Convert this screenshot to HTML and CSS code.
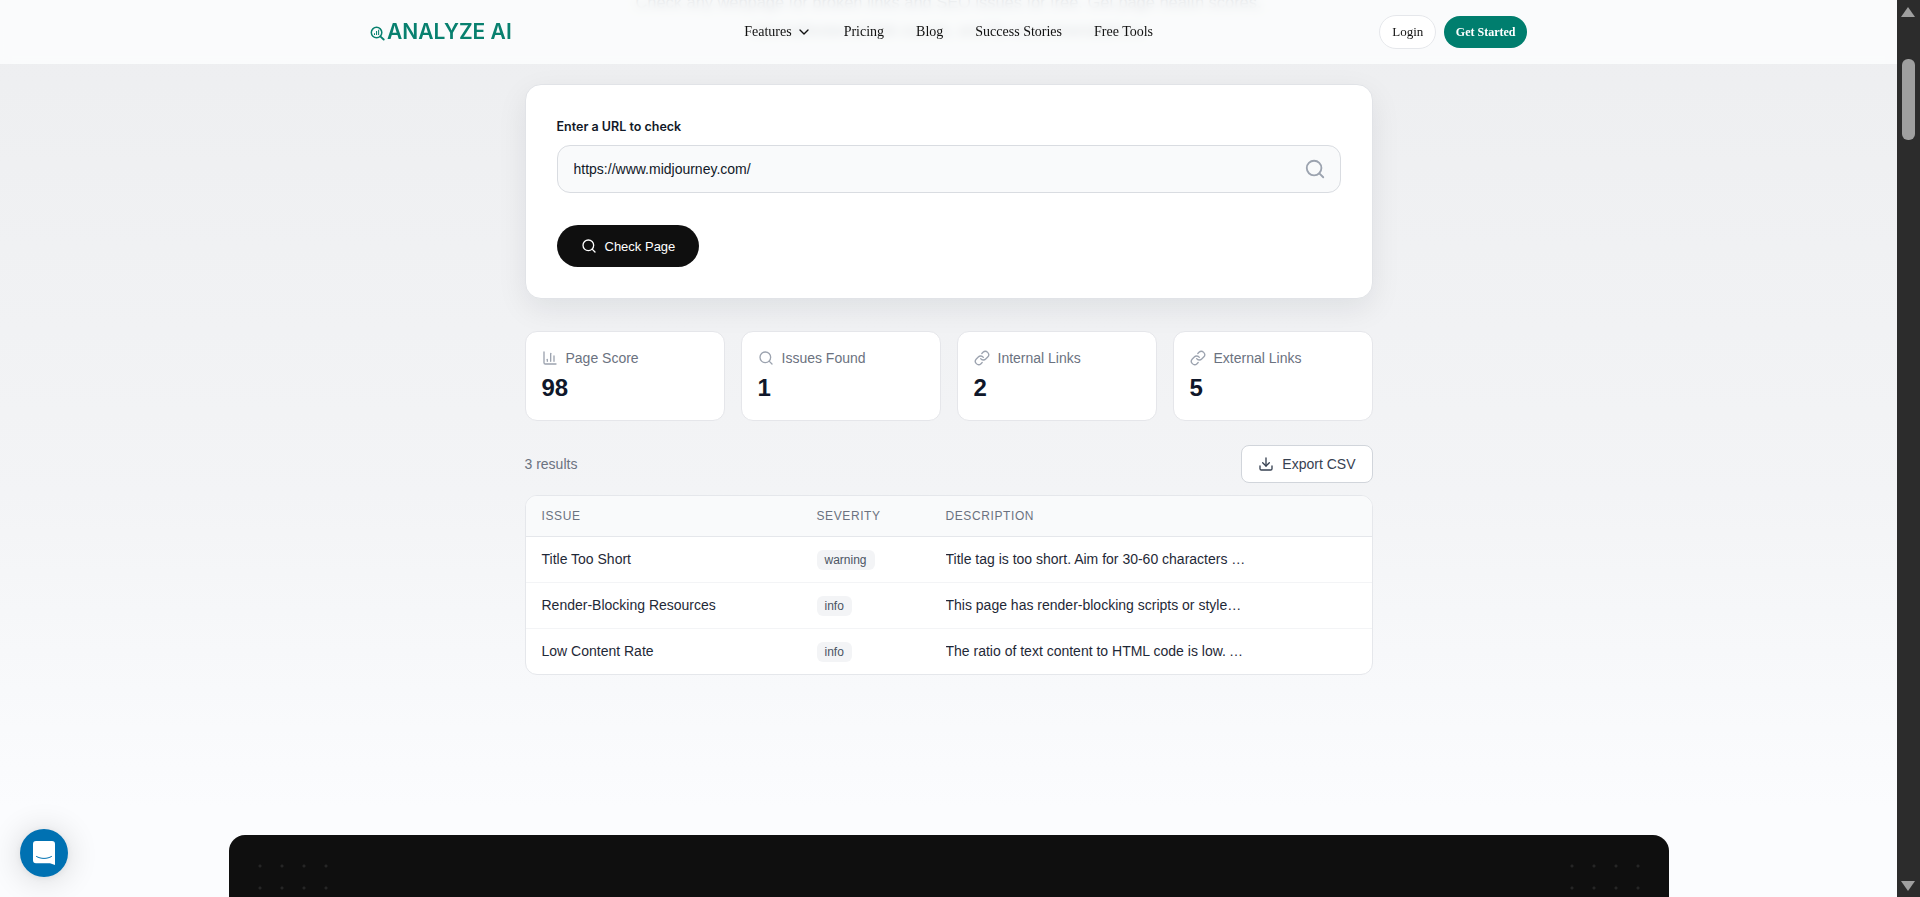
FILE: index.html
```html
<!DOCTYPE html>
<html lang="en">
<head>
  <meta charset="UTF-8">
  <meta name="viewport" content="width=device-width, initial-scale=1.0">
  <title>Broken Link Checker - Analyze AI</title>
  <link rel="stylesheet" href="styles.css">
</head>
<body>
  <div class="page">
    <header class="site-header">
      <a class="logo" href="#">
        <svg class="logo-icon" viewBox="0 0 16 16" fill="none" stroke="currentColor">
          <circle cx="7" cy="7" r="5.6" stroke-width="1.6"/>
          <path d="M11 11l3.6 3.4" stroke-width="2" stroke-linecap="round"/>
          <path d="M4.8 9.5V7.8M7 9.5V5.2M9.2 9.5V4" stroke-width="1.1"/>
        </svg>
        <span class="logo-text">ANALYZE AI</span>
      </a>
      <nav class="main-nav">
        <a class="nav-link" href="#">Features
          <svg class="nav-chevron" viewBox="0 0 24 24" fill="none" stroke="currentColor" stroke-width="2" stroke-linecap="round" stroke-linejoin="round"><path d="m6 9 6 6 6-6"/></svg>
        </a>
        <a class="nav-link" href="#">Pricing</a>
        <a class="nav-link" href="#">Blog</a>
        <a class="nav-link" href="#">Success Stories</a>
        <a class="nav-link" href="#">Free Tools</a>
      </nav>
      <div class="header-actions">
        <a class="btn-login" href="#">Login</a>
        <a class="btn-started" href="#">Get Started</a>
      </div>
    </header>

    <main class="content">
      <p class="hero-text">Check any webpage for broken links and SEO issues for free. Get page health scores, internal/external link counts, and fix recommendations.</p>

      <section class="check-card">
        <label class="field-label" for="url-input">Enter a URL to check</label>
        <div class="field-wrap">
          <input class="url-input" id="url-input" type="text" value="https://www.midjourney.com/">
          <svg class="field-icon" viewBox="0 0 24 24" fill="none" stroke="currentColor" stroke-width="2" stroke-linecap="round" stroke-linejoin="round"><circle cx="11" cy="11" r="8"/><path d="m21 21-4.3-4.3"/></svg>
        </div>
        <button class="btn-check">
          <svg class="icon" viewBox="0 0 24 24" fill="none" stroke="currentColor" stroke-width="2" stroke-linecap="round" stroke-linejoin="round"><circle cx="11" cy="11" r="8"/><path d="m21 21-4.3-4.3"/></svg>
          Check Page
        </button>
      </section>

      <section class="stats-grid">
        <div class="stat-card">
          <div class="stat-label">
            <svg class="icon" viewBox="0 0 24 24" fill="none" stroke="currentColor" stroke-width="2" stroke-linecap="round" stroke-linejoin="round"><path d="M3 3v16a2 2 0 0 0 2 2h16"/><path d="M18 17V9"/><path d="M13 17V5"/><path d="M8 17v-3"/></svg>
            Page Score
          </div>
          <div class="stat-value">98</div>
        </div>
        <div class="stat-card">
          <div class="stat-label">
            <svg class="icon" viewBox="0 0 24 24" fill="none" stroke="currentColor" stroke-width="2" stroke-linecap="round" stroke-linejoin="round"><circle cx="11" cy="11" r="8"/><path d="m21 21-4.3-4.3"/></svg>
            Issues Found
          </div>
          <div class="stat-value">1</div>
        </div>
        <div class="stat-card">
          <div class="stat-label">
            <svg class="icon" viewBox="0 0 24 24" fill="none" stroke="currentColor" stroke-width="2" stroke-linecap="round" stroke-linejoin="round"><path d="M10 13a5 5 0 0 0 7.54.54l3-3a5 5 0 0 0-7.07-7.07l-1.72 1.71"/><path d="M14 11a5 5 0 0 0-7.54-.54l-3 3a5 5 0 0 0 7.07 7.07l1.71-1.71"/></svg>
            Internal Links
          </div>
          <div class="stat-value">2</div>
        </div>
        <div class="stat-card">
          <div class="stat-label">
            <svg class="icon" viewBox="0 0 24 24" fill="none" stroke="currentColor" stroke-width="2" stroke-linecap="round" stroke-linejoin="round"><path d="M10 13a5 5 0 0 0 7.54.54l3-3a5 5 0 0 0-7.07-7.07l-1.72 1.71"/><path d="M14 11a5 5 0 0 0-7.54-.54l-3 3a5 5 0 0 0 7.07 7.07l1.71-1.71"/></svg>
            External Links
          </div>
          <div class="stat-value">5</div>
        </div>
      </section>

      <div class="results-bar">
        <span class="results-count">3 results</span>
        <button class="btn-export">
          <svg class="icon" viewBox="0 0 24 24" fill="none" stroke="currentColor" stroke-width="2" stroke-linecap="round" stroke-linejoin="round"><path d="M21 15v4a2 2 0 0 1-2 2H5a2 2 0 0 1-2-2v-4"/><path d="m7 10 5 5 5-5"/><path d="M12 15V3"/></svg>
          Export CSV
        </button>
      </div>

      <div class="table-wrap">
        <table class="results-table">
          <thead>
            <tr>
              <th class="col-issue">Issue</th>
              <th class="col-severity">Severity</th>
              <th>Description</th>
            </tr>
          </thead>
          <tbody>
            <tr>
              <td>Title Too Short</td>
              <td><span class="badge">warning</span></td>
              <td><div class="truncate">Title tag is too short. Aim for 30-60 characters for better click-through rates.</div></td>
            </tr>
            <tr>
              <td>Render-Blocking Resources</td>
              <td><span class="badge">info</span></td>
              <td><div class="truncate">This page has render-blocking scripts or stylesheets in the document head.</div></td>
            </tr>
            <tr>
              <td>Low Content Rate</td>
              <td><span class="badge">info</span></td>
              <td><div class="truncate">The ratio of text content to HTML code is low. Add more useful copy to the page.</div></td>
            </tr>
          </tbody>
        </table>
      </div>
    </main>

    <section class="cta-section">
      <div class="dots dots-left"></div>
      <div class="dots dots-right"></div>
    </section>

    <button class="chat-btn" aria-label="Open chat">
      <svg viewBox="0 0 22 24" width="22" height="24">
        <path fill="#fff" d="M3 0h16a3 3 0 0 1 3 3v21l-5-1.800H3a3 3 0 0 1-3-3V3a3 3 0 0 1 3-3z"/>
        <path fill="none" stroke="#0071b2" stroke-width="1" stroke-linecap="round" d="M3.500 15.500c4.500 2.600 10.500 2.600 15 0"/>
      </svg>
    </button>
  </div>

  <div class="scrollbar">
    <div class="arrow-up"></div>
    <div class="thumb"></div>
    <div class="arrow-down"></div>
  </div>
</body>
</html>
```

FILE: styles.css
```css
/* Page frame */
html, body {
  height: 100%;
  margin: 0;
}

body {
  display: flex;
  overflow: hidden;
  font-family: "Liberation Sans", Arial, sans-serif;
  color: #111827;
}

.page {
  position: relative;
  flex: 1;
  min-width: 0;
  overflow: hidden;
  background: linear-gradient(180deg, #edeef0 0%, #f3f4f6 55%, #fbfcfe 90%);
}

/* Scrollbar */
.scrollbar {
  position: relative;
  width: 23px;
  flex-shrink: 0;
  background-color: #2c2c2c;
}

.arrow-up, .arrow-down {
  position: absolute;
  left: 4px;
  width: 0;
  height: 0;
  border-left: 7.5px solid transparent;
  border-right: 7.5px solid transparent;
}

.arrow-up {
  top: 7px;
  border-bottom: 10px solid #9f9f9f;
}

.arrow-down {
  bottom: 6px;
  border-top: 10px solid #9f9f9f;
}

.thumb {
  position: absolute;
  top: 59px;
  left: 5px;
  width: 13px;
  height: 81px;
  border-radius: 6px;
  background-color: #9f9f9f;
}

/* Header */
.site-header {
  position: absolute;
  top: 0;
  left: 0;
  right: 0;
  z-index: 10;
  height: 64px;
  padding: 0 370px;
  display: flex;
  align-items: center;
  justify-content: space-between;
  background-color: rgba(252, 254, 254, 0.82);
  backdrop-filter: blur(5px);
  font-family: "Liberation Serif", "Times New Roman", serif;
}

.logo {
  display: flex;
  align-items: center;
  gap: 2px;
  width: 141px;
  color: #08806f;
  text-decoration: none;
  white-space: nowrap;
}

.logo-icon {
  width: 15px;
  height: 15px;
  margin-top: 3px;
  flex-shrink: 0;
}

.logo-text {
  font-family: Inter, sans-serif;
  font-size: 21px;
  font-weight: 600;
  line-height: 24px;
}

.main-nav {
  display: flex;
  align-items: center;
  gap: 32px;
  margin-top: -1px;
  margin-left: 7px;
}

.nav-link {
  display: flex;
  align-items: center;
  gap: 4px;
  font-size: 14px;
  color: #111;
  text-decoration: none;
}

.nav-chevron {
  width: 16px;
  height: 16px;
}

.header-actions {
  display: flex;
  align-items: center;
  gap: 8px;
}

.btn-login {
  padding: 0 12px;
  line-height: 32px;
  font-size: 13px;
  color: #111;
  text-decoration: none;
  background-color: #fff;
  border: 1px solid #e5e7eb;
  border-radius: 17px;
}

.btn-started {
  padding: 0 11.5px;
  line-height: 32px;
  font-size: 12px;
  font-weight: 700;
  color: #fff;
  text-decoration: none;
  background-color: #007e6e;
  border-radius: 16px;
}

/* Main column */
.content {
  width: 848px;
  margin: -12px auto 0;
}

.hero-text {
  margin: 0 auto 40px;
  max-width: 640px;
  font-size: 16.4px;
  line-height: 28px;
  text-align: center;
  color: #6b7280;
}

.check-card {
  padding: 32px 31px 31px;
  background: white;
  border: 1px solid #e1e3e7;
  border-radius: 16px;
  box-shadow: 0 10px 30px rgba(17, 24, 39, 0.08);
}

.field-label {
  display: block;
  margin-bottom: 9px;
  font-family: Inter, sans-serif;
  font-size: 12.5px;
  font-weight: 600;
  line-height: 19px;
  color: #111827;
}

.field-wrap {
  position: relative;
  margin-bottom: 32px;
}

.url-input {
  display: block;
  box-sizing: border-box;
  width: 100%;
  height: 48px;
  padding: 0 48px 0 16px;
  font-family: "Liberation Sans", Arial, sans-serif;
  font-size: 14px;
  color: #111827;
  background-color: #f9fafb;
  border: 1px solid #d9dce1;
  border-radius: 13px;
  outline: none;
}

.field-icon {
  position: absolute;
  top: 13px;
  right: 15px;
  width: 22px;
  height: 22px;
  color: #9ca3af;
}

.icon {
  width: 16px;
  height: 16px;
  flex-shrink: 0;
}

.btn-check {
  display: flex;
  align-items: center;
  gap: 8px;
  height: 42px;
  padding: 0 24px;
  font-family: "Liberation Sans", Arial, sans-serif;
  font-size: 13px;
  color: white;
  background-color: #0f0f0f;
  border: none;
  border-radius: 21px;
}

/* Stat cards */
.stats-grid {
  display: grid;
  grid-template-columns: repeat(4, 1fr);
  gap: 16px;
  margin-top: 32px;
}

.stat-card {
  padding: 16px;
  background: white;
  border: 1px solid #e5e6ea;
  border-radius: 12px;
}

.stat-label {
  display: flex;
  align-items: center;
  gap: 8px;
  margin-bottom: 4px;
  font-size: 14px;
  line-height: 20px;
  color: #6b7280;
}

.stat-label .icon {
  color: #9ca3af;
}

.stat-value {
  font-size: 24px;
  font-weight: 700;
  line-height: 32px;
  color: #0f172a;
}

/* Results */
.results-bar {
  display: flex;
  justify-content: space-between;
  align-items: center;
  margin-top: 24px;
  margin-bottom: 12px;
}

.results-count {
  font-size: 14px;
  color: #6b7280;
}

.btn-export {
  display: flex;
  align-items: center;
  gap: 8px;
  height: 38px;
  padding: 0 16px;
  font-family: "Liberation Sans", Arial, sans-serif;
  font-size: 14px;
  color: #374151;
  background: white;
  border: 1px solid #d1d5db;
  border-radius: 8px;
}

.table-wrap {
  overflow: hidden;
  background: white;
  border: 1px solid #e5e7eb;
  border-radius: 12px;
}

.results-table {
  width: 100%;
  table-layout: fixed;
  border-collapse: collapse;
}

.results-table th {
  height: 40px;
  padding: 0 16px;
  font-size: 12px;
  font-weight: 500;
  letter-spacing: 0.6px;
  text-align: left;
  text-transform: uppercase;
  color: #6b7280;
  background-color: #f9fafb;
  border-bottom: 1px solid #e5e7eb;
}

.col-issue {
  width: 243px;
}

.col-severity {
  width: 97px;
}

.results-table td {
  box-sizing: border-box;
  height: 46px;
  padding: 0 16px 1px;
  font-size: 14px;
  color: #1f2937;
  border-bottom: 1px solid #f3f4f6;
}

.results-table tbody tr:last-child td {
  height: 45px;
  border-bottom: none;
}

.badge {
  position: relative;
  top: 1px;
  display: inline-block;
  padding: 0 8px;
  font-size: 12px;
  line-height: 20px;
  color: #4b5563;
  background-color: #f3f4f6;
  border-radius: 6px;
}

.truncate {
  max-width: 300px;
  overflow: hidden;
  white-space: nowrap;
  text-overflow: ellipsis;
}

/* Dark band at the bottom */
.cta-section {
  position: relative;
  width: 1440px;
  height: 400px;
  margin: 160px auto 0;
  background-color: #0f0f0f;
  border-radius: 16px;
}

.dots {
  position: absolute;
  top: 20px;
  width: 88px;
  height: 88px;
  background-image: radial-gradient(circle, #262626 1.2px, transparent 1.8px);
  background-size: 22px 22px;
}

.dots-left {
  left: 20px;
}

.dots-right {
  right: 20px;
}

/* Chat launcher */
.chat-btn {
  position: absolute;
  left: 20px;
  bottom: 20px;
  z-index: 20;
  display: flex;
  align-items: center;
  justify-content: center;
  width: 48px;
  height: 48px;
  padding: 0;
  background-color: #0071b2;
  border: none;
  border-radius: 50%;
  box-shadow: 0 1px 6px rgba(0, 0, 0, 0.06), 0 2px 32px rgba(0, 0, 0, 0.16);
}
```
